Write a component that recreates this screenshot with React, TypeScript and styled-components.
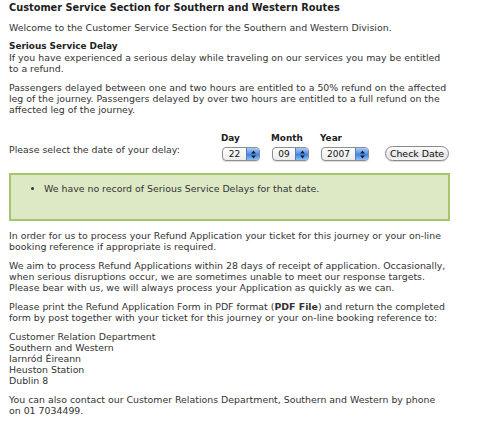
import React from 'react';
import styled, {createGlobalStyle} from "styled-components";

const GlobalStyle = createGlobalStyle`
    body {
        margin: 0;
        background: #fff;
        font-family: "DejaVu Sans", Verdana, sans-serif;
        color: #333;
    }
`;

const Page = styled.div`
    width: 441px;
    padding: 2px 0 0 9px;
    font-size: 9.4px;
    line-height: 11px;
`;

const Title = styled.h1`
    margin: 0 0 8px;
    font-size: 9.8px;
    line-height: 12px;
    font-weight: bold;
    color: #1e1e1e;
`;

const Para = styled.p`
    margin: 0 0 8px;
`;

const SubHead = styled.strong`
    display: block;
    font-size: 8.9px;
    color: #222;
`;

const FileLink = styled.b`
    font-weight: bold;
`;

const NoWrap = styled.span`
    white-space: nowrap;
`;

const DateRow = styled.div`
    display: flex;
    align-items: flex-end;
    margin: 18px 0 12px;
`;

const Prompt = styled.div`
    width: 212px;
    padding-bottom: 6px;
`;

const Fields = styled.div`
    display: flex;
    align-items: flex-end;
    gap: 11px;
`;

const Field = styled.div`
    display: flex;
    flex-direction: column;
`;

const FieldLabel = styled.span`
    font-weight: bold;
    font-size: 8.9px;
    color: #222;
    margin-bottom: 3px;
`;

const SelectBox = styled.div<{ $w: number }>`
    display: flex;
    width: ${p => p.$w}px;
    height: 14px;
    margin-left: 1px;
    box-sizing: border-box;
    border: 1px solid #8e8e8e;
    border-radius: 4px;
    overflow: hidden;
    background: linear-gradient(#ffffff, #ececec);
    box-shadow: 0 1px 1px rgba(0, 0, 0, 0.15);
`;

const SelectValue = styled.span`
    flex: 1;
    text-align: center;
    font-size: 9px;
    line-height: 12px;
    color: #111;
`;

const Stepper = styled.span`
    width: 12px;
    display: flex;
    align-items: center;
    justify-content: center;
    border-left: 1px solid #5a7fb8;
    background: linear-gradient(#a9cdf7, #4f8fe6 50%, #3c7ee0 51%, #8ec0f6);
`;

const CheckButton = styled.button`
    margin-left: 16px;
    height: 15px;
    width: 64px;
    padding: 0;
    border: 1px solid #8a8a8a;
    border-radius: 8px;
    background: linear-gradient(#ffffff, #e6e6e6 60%, #f4f4f4);
    font-family: inherit;
    font-size: 9.4px;
    line-height: 13px;
    color: #111;
    box-shadow: 0 1px 1px rgba(0, 0, 0, 0.15);
`;

const Notice = styled.div`
    height: 48px;
    box-sizing: border-box;
    border: 2px solid #a6c66c;
    background: #dde8c5;
    margin-bottom: 9px;
`;

const NoticeList = styled.ul`
    margin: 0;
    padding: 8px 0 0 33px;
    list-style: disc;
`;

const Address = styled.p`
    margin: 0 0 8px;
`;

const Arrows = () => (
    <svg width="5" height="9" viewBox="0 0 5 9">
        <path d="M2.5 0.5 L4.8 3.5 L0.2 3.5 Z" fill="#1a1a1a"/>
        <path d="M2.5 8.5 L4.8 5.5 L0.2 5.5 Z" fill="#1a1a1a"/>
    </svg>
);

const Select: React.FC<{ value: string; width: number }> = ({value, width}) => (
    <SelectBox $w={width}>
        <SelectValue>{value}</SelectValue>
        <Stepper><Arrows/></Stepper>
    </SelectBox>
);

export default function App() {
    return (
        <Page>
            <GlobalStyle/>
            <Title>Customer Service Section for Southern and Western Routes</Title>
            <Para>Welcome to the Customer Service Section for the Southern and Western Division.</Para>
            <Para>
                <SubHead>Serious Service Delay</SubHead>
                If you have experienced a serious delay while traveling on our services you may be entitled
                to a refund.
            </Para>
            <Para>
                Passengers delayed between one and two hours are entitled to a 50% refund on the affected
                leg of the journey. Passengers delayed by over two hours are entitled to a full refund on the
                affected leg of the journey.
            </Para>
            <DateRow>
                <Prompt>Please select the date of your delay:</Prompt>
                <Fields>
                    <Field>
                        <FieldLabel>Day</FieldLabel>
                        <Select value="22" width={38}/>
                    </Field>
                    <Field>
                        <FieldLabel>Month</FieldLabel>
                        <Select value="09" width={37}/>
                    </Field>
                    <Field>
                        <FieldLabel>Year</FieldLabel>
                        <Select value="2007" width={48}/>
                    </Field>
                </Fields>
                <CheckButton>Check Date</CheckButton>
            </DateRow>
            <Notice>
                <NoticeList>
                    <li>We have no record of Serious Service Delays for that date.</li>
                </NoticeList>
            </Notice>
            <Para>
                In order for us to process your Refund Application your ticket for this journey or your on-line
                booking reference if appropriate is required.
            </Para>
            <Para>
                We aim to process Refund Applications within 28 days of receipt of application. Occasionally,
                when serious disruptions occur, we are sometimes unable to meet our response targets.
                Please bear with us, we will always process your Application as quickly as we can.
            </Para>
            <Para>
                Please print the Refund Application Form in PDF format (<FileLink>PDF File</FileLink>) and return the completed
                form by post together with your ticket for this journey or your on-line booking reference to:
            </Para>
            <Address>
                Customer Relation Department<br/>
                Southern and Western<br/>
                Iarnród Éireann<br/>
                Heuston Station<br/>
                Dublin 8
            </Address>
            <Para>
                You can also contact our Customer Relations Department, Southern and Western by phone{" "}
                <NoWrap>on 01 7034499.</NoWrap>
            </Para>
        </Page>
    );
}
